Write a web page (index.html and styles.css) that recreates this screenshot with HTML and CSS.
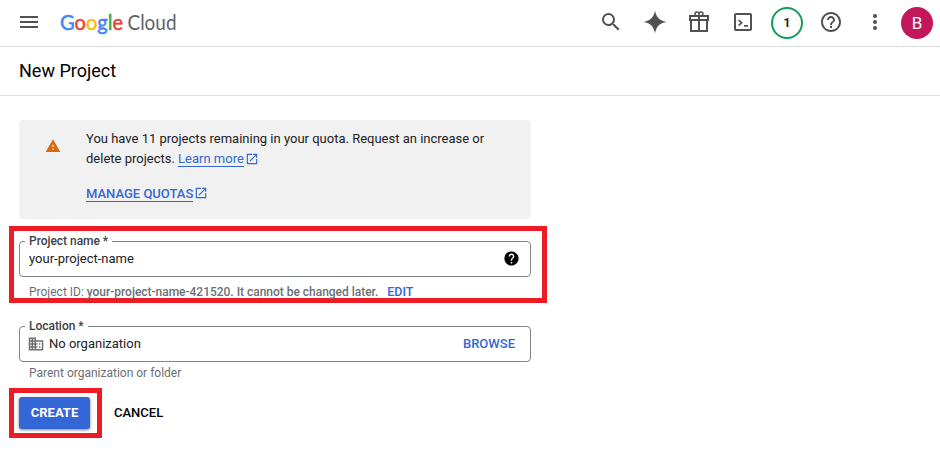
FILE: index.html
```html
<!DOCTYPE html>
<html lang="en">
<head>
<meta charset="utf-8">
<title>New Project</title>
<link rel="stylesheet" href="styles.css">
</head>
<body>
<header class="topbar">
  <svg class="menu" width="24" height="24" viewBox="0 0 24 24"><path d="M3 5h18v2H3zM3 10h18v2H3zM3 15h18v2H3z"/></svg>
  <svg class="logo" width="118" height="26" viewBox="0 0 118 26">
    <text class="logo-google" x="0" y="20" textLength="63" lengthAdjust="spacingAndGlyphs"><tspan class="blue">G</tspan><tspan class="red">o</tspan><tspan class="yellow">o</tspan><tspan class="blue">g</tspan><tspan class="green">l</tspan><tspan class="red">e</tspan></text>
    <text class="logo-cloud" x="67.500" y="20" textLength="49" lengthAdjust="spacingAndGlyphs">Cloud</text>
  </svg>
  <nav class="tools">
    <svg width="24" height="24" viewBox="0 0 24 24"><path d="M15.500 14h-.79l-.28-.27A6.470 6.470 0 0 0 16 9.500 6.500 6.500 0 1 0 9.500 16c1.610 0 3.090-.59 4.230-1.570l.27.28v.79l5 4.990L20.490 19l-4.990-5zm-6 0C7.010 14 5 11.990 5 9.500S7.010 5 9.500 5 14 7.010 14 9.500 11.990 14 9.500 14z"/></svg>
    <svg width="24" height="24" viewBox="0 0 24 24"><path d="M12 .6C13.200 7.500 16.500 10.800 23.400 12 16.500 13.200 13.200 16.500 12 23.400 10.800 16.500 7.500 13.200.6 12 7.500 10.800 10.800 7.500 12 .6z"/></svg>
    <svg width="24" height="24" viewBox="0 0 24 24"><path fill-rule="evenodd" d="M2 5h20v6h-1v11H3V11H2zM4 7v2h7V7zM13 7v2h7V7zM5 11v9h6v-9zM13 11v9h6v-9z"/><path class="stroke" d="M12 5.500V4a2 2 0 1 0-4 0c0 1 .7 1.500 1.500 1.500M12 4a2 2 0 1 1 4 0c0 1-.7 1.500-1.500 1.500"/></svg>
    <svg width="24" height="24" viewBox="0 0 24 24"><rect class="stroke thick" x="4" y="4" width="16" height="16" rx="1"/><path d="M7 10.500l1.300-1.100 3.600 3.300-3.600 3.300L7 14.900l2.400-2.200zM13 15h4v1.700h-4z"/></svg>
    <span class="count">1</span>
    <svg width="24" height="24" viewBox="0 0 24 24"><path d="M11 18h2v-2h-2v2zm1-16C6.480 2 2 6.480 2 12s4.480 10 10 10 10-4.480 10-10S17.520 2 12 2zm0 18c-4.410 0-8-3.590-8-8s3.590-8 8-8 8 3.590 8 8-3.590 8-8 8zm0-14c-2.210 0-4 1.790-4 4h2c0-1.100.9-2 2-2s2 .9 2 2c0 2-3 1.750-3 5h2c0-2.250 3-2.500 3-5 0-2.210-1.790-4-4-4z"/></svg>
    <svg width="24" height="24" viewBox="0 0 24 24"><circle cx="12" cy="6" r="2"/><circle cx="12" cy="12" r="2"/><circle cx="12" cy="18" r="2"/></svg>
    <span class="avatar">B</span>
  </nav>
</header>
<div class="titlebar"><h1>New Project</h1></div>
<main>
  <section class="notice">
    <svg class="warn" width="16" height="16" viewBox="0 0 24 24"><path d="M1 21h22L12 2 1 21zm12-3h-2v-2h2v2zm0-4h-2v-4h2v4z"/></svg>
    <div>
      <p class="line1">You have 11 projects remaining in your quota. Request an increase or</p>
      <p class="line2"><span>delete projects. </span><a>Learn more</a><svg class="ext" width="14" height="14" viewBox="0 0 24 24"><path d="M19 19H5V5h7V3H3v18h18v-9h-2v7zM14 3v2h3.590l-9.830 9.830 1.410 1.410L19 6.410V10h2V3h-7z"/></svg></p>
      <p class="line3"><a>MANAGE QUOTAS</a><svg class="ext" width="14" height="14" viewBox="0 0 24 24"><path d="M19 19H5V5h7V3H3v18h18v-9h-2v7zM14 3v2h3.590l-9.830 9.830 1.410 1.410L19 6.410V10h2V3h-7z"/></svg></p>
    </div>
  </section>
  <section class="mark mark-name">
    <div class="field">
      <label class="label-name">Project name *</label>
      <span class="value name">your-project-name</span>
      <svg class="help" width="17" height="17" viewBox="0 0 24 24"><path d="M12 2C6.480 2 2 6.480 2 12s4.480 10 10 10 10-4.480 10-10S17.520 2 12 2zm1 17h-2v-2h2v2zm2.070-7.750l-.9.920C13.450 12.900 13 13.500 13 15h-2v-.5c0-1.100.45-2.100 1.170-2.830l1.240-1.260c.37-.36.59-.86.59-1.410 0-1.100-.9-2-2-2s-2 .9-2 2H8c0-2.210 1.790-4 4-4s4 1.790 4 4c0 .88-.36 1.680-.93 2.250z"/></svg>
    </div>
    <p class="hint hint-id"><span>Project ID: </span><b>your-project-name-421520. It cannot be changed later.</b><a>EDIT</a></p>
  </section>
  <section class="location">
    <div class="field">
      <label class="label-loc">Location *</label>
      <svg class="org" width="16" height="16" viewBox="1 1 22 22"><path d="M12 7V3H2v18h20V7H12zM6 19H4v-2h2v2zm0-4H4v-2h2v2zm0-4H4V9h2v2zm0-4H4V5h2v2zm4 12H8v-2h2v2zm0-4H8v-2h2v2zm0-4H8V9h2v2zm0-4H8V5h2v2zm10 12h-8v-2h2v-2h-2v-2h2v-2h-2V9h8v10zm-2-8h-2v2h2v-2zm0 4h-2v2h2v-2z"/></svg>
      <span class="value org-name">No organization</span>
      <a class="browse">BROWSE</a>
    </div>
    <p class="hint parent">Parent organization or folder</p>
  </section>
  <div class="actions">
    <div class="mark mark-create"><button class="create">CREATE</button></div>
    <button class="cancel">CANCEL</button>
  </div>
</main>
</body>
</html>
```
FILE: styles.css
```css
* { box-sizing: border-box; }
body { margin: 0; background: #fff; color: #202124; font: 13px/20px Roboto, sans-serif; height: 455px; overflow: hidden; }
p, h1 { margin: 0; white-space: nowrap; }
svg { display: block; flex: none; fill: #515151; }
a { color: #3367d6; }
button { border: 0; padding: 0; font: 500 13px/32px Roboto, sans-serif; }

.topbar { display: flex; align-items: center; height: 47px; padding: 0 7px 0 17px; border-bottom: 1px solid #dedede; }
.menu { margin-top: -1px; }
.logo { margin-left: 19px; margin-top: -1px; overflow: visible; }
.logo text { font-family: Lato, sans-serif; font-size: 20.5px; }
.logo-google tspan { stroke-width: .5; }
.logo-cloud { fill: #5f6368; }
.blue { fill: #4285f4; stroke: #4285f4; }
.red { fill: #ea4335; stroke: #ea4335; }
.yellow { fill: #fbbc05; stroke: #fbbc05; }
.green { fill: #34a853; stroke: #34a853; }
.tools { display: flex; align-items: center; margin-left: auto; }
.tools > svg { margin: -2px 10px 0; }
.stroke { fill: none; stroke: #515151; stroke-width: 1.5; }
.thick { stroke-width: 2; }
.count { width: 32px; height: 32px; margin: 0 6px; border: 2px solid #0f9d58; border-radius: 50%; text-align: center; font-weight: 700; font-size: 12px; line-height: 28px; }
.avatar { width: 32px; height: 32px; margin-left: 4px; border-radius: 50%; background: #c2185b; color: #fff; text-align: center; font-size: 17px; line-height: 33px; }

.titlebar { height: 49px; padding-left: 19px; border-bottom: 1px solid #dedede; }
h1 { font-size: 18px; font-weight: 400; line-height: 48px; color: #000; }

main { padding: 24px 0 0 9px; }
.notice { display: flex; width: 512px; height: 99px; margin-left: 10px; padding: 9px 0 0 26px; border-radius: 4px; background: #f1f1f1; }
.warn { margin: 9px 25px 0 0; fill: #d96a0b; }
.notice a { border-bottom: 1px solid #3367d6; line-height: 15px; }
.line2, .line3 { display: flex; align-items: center; }
.line2 { white-space: pre; }
.line3 { margin-top: 15px; padding-top: 2px; font-weight: 500; }
.line3 .ext { margin-top: -2px; }
.ext { margin-left: 1px; fill: #3367d6; }

.mark { border: 5px solid #ed1c24; }
.mark-name { width: 538px; height: 77px; margin-top: 7px; padding: 10px 0 0 5px; }
.field { position: relative; display: flex; align-items: center; width: 512px; height: 36px; padding: 0 11px 0 9px; border: 1px solid #80868b; border-radius: 4px; }
.field label { position: absolute; left: 5px; top: -9px; padding: 0 4px; background: #fff; font-size: 12px; font-weight: 500; line-height: 16px; letter-spacing: -.03px; color: #3c4043; }
.help { margin-left: auto; margin-right: -1px; margin-top: -2px; fill: #000; }
.hint { padding-left: 10px; font-size: 12px; line-height: 16px; color: #6b6f73; }
.hint-id { display: flex; margin-top: 7px; white-space: pre; }
.hint b { font-weight: 500; letter-spacing: -.02px; }
.hint-id a { margin-left: 9px; font-weight: 500; font-size: 12.5px; }
.location { margin: 23px 0 0 10px; }
.org { margin-left: -1px; fill: #6f6f6f; }
.org-name { margin-left: 5px; }
.browse { margin-left: auto; margin-right: 4px; font-weight: 500; }
.parent { margin-top: 3px; }
.actions { display: flex; align-items: center; margin-top: 7px; }
.mark-create { width: 93px; height: 50px; padding: 4px 0 0 5px; }
.create { display: block; width: 71px; height: 32px; border-radius: 3px; background: #3367d6; color: #fff; font-weight: 700; box-shadow: 0 1px 3px rgba(0,0,0,.5); }
.cancel { margin-left: 12px; background: none; color: #000; }
```
